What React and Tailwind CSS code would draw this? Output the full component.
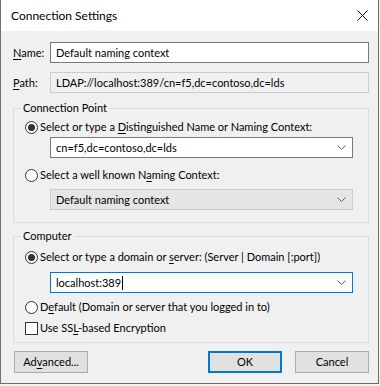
import React from "react";

function U({ children }) {
  return <span className="underline underline-offset-[2px] decoration-1">{children}</span>;
}

function Radio({ checked }) {
  return (
    <span className="w-[13px] h-[13px] rounded-full border border-[#333] bg-white flex items-center justify-center shrink-0">
      {checked && <span className="w-[7px] h-[7px] rounded-full bg-[#333]" />}
    </span>
  );
}

function Chevron() {
  return (
    <svg width="9" height="5" viewBox="0 0 9 5" className="shrink-0">
      <path d="M0.5 0.5 L4.5 4.5 L8.5 0.5" fill="none" stroke="#606060" strokeWidth="1" />
    </svg>
  );
}

function Legend({ children }) {
  return (
    <span className="absolute -top-[9px] left-[7px] px-[2px] bg-[#f0f0f0] leading-[16px]">{children}</span>
  );
}

export default function App() {
  return (
    <div className="w-[380px] h-[386px] bg-[#f0f0f0] font-['Lato',sans-serif] text-[11px] text-black leading-[16px]">
      <div className="w-[379px] h-[384px] flex flex-col border-l border-r border-b border-[#6e6e6e] bg-[#f0f0f0]">
        {/* Title bar */}
        <div className="h-[31px] bg-white flex items-center justify-between pl-[10px] pr-[10px] shrink-0 text-[12px]">
          <span>Connection Settings</span>
          <svg width="11" height="11" viewBox="0 0 11 11">
            <path d="M0.5 0.5 L10.5 10.5 M10.5 0.5 L0.5 10.5" stroke="#111" strokeWidth="1" />
          </svg>
        </div>

        <div className="flex flex-col pl-[12px] pr-[9px]">
          {/* Name / Path */}
          <div className="flex items-center mt-[11px]">
            <span className="w-[37px]">
              <U>N</U>ame:
            </span>
            <div className="flex-1 h-[21px] border border-[#7a7a7a] bg-white flex items-center pl-[5px]">
              Default naming context
            </div>
          </div>
          <div className="flex items-center mt-[9px]">
            <span className="w-[37px]">
              <U>P</U>ath:
            </span>
            <div className="flex-1 h-[21px] border border-[#cccccc] bg-[#f0f0f0] flex items-center pl-[5px]">
              LDAP://localhost:389/cn=f5,dc=contoso,dc=lds
            </div>
          </div>

          {/* Connection Point */}
          <div className="relative mt-[15px] border border-[#dcdcdc] pt-[10px] pb-[12px] pl-[11px] pr-[15px]">
            <Legend>Connection Point</Legend>
            <div className="flex items-center gap-[2px] h-[16px] whitespace-nowrap">
              <Radio checked />
              <span>
                Select or type a <U>D</U>istinguished Name or Naming Context:
              </span>
            </div>
            <div className="ml-[25px] mt-[2px] h-[21px] border border-[#7a7a7a] bg-white flex items-center justify-between pl-[5px] pr-[6px]">
              <span>cn=f5,dc=contoso,dc=lds</span>
              <Chevron />
            </div>
            <div className="flex items-center gap-[2px] h-[16px] mt-[9px] whitespace-nowrap">
              <Radio />
              <span>
                Select a well known N<U>a</U>ming Context:
              </span>
            </div>
            <div className="ml-[25px] mt-[6px] h-[21px] border border-[#cccccc] bg-[#e5e5e5] flex items-center justify-between pl-[5px] pr-[6px]">
              <span>Default naming context</span>
              <Chevron />
            </div>
          </div>

          {/* Computer */}
          <div className="relative mt-[13px] border border-[#dcdcdc] pt-[12px] pb-[6px] pl-[11px] pr-[15px]">
            <Legend>Computer</Legend>
            <div className="flex items-center gap-[2px] h-[16px] whitespace-nowrap">
              <Radio checked />
              <span>
                Select or type a domain or <U>s</U>erver: (Server | Domain [:port])
              </span>
            </div>
            <div className="ml-[25px] mt-[7px] h-[21px] border border-[#0078d7] bg-white flex items-center justify-between pl-[5px] pr-[6px]">
              <span className="flex items-center">
                localhost:389
                <span className="w-[1px] h-[14px] bg-black ml-[1px]" />
              </span>
              <Chevron />
            </div>
            <div className="flex items-center gap-[2px] h-[16px] mt-[6px] whitespace-nowrap">
              <Radio />
              <span>
                D<U>e</U>fault (Domain or server that you logged in to)
              </span>
            </div>
            <div className="flex items-center gap-[2px] h-[16px] mt-[5px] whitespace-nowrap">
              <span className="w-[13px] h-[13px] border border-[#333] bg-white shrink-0" />
              <span>
                Use SS<U>L</U>-based Encryption
              </span>
            </div>
          </div>

          {/* Buttons */}
          <div className="flex items-center mt-[8px] pl-[1px]">
            <div className="w-[74px] h-[22px] border border-[#adadad] bg-[#e1e1e1] flex items-center justify-center">
              Ad<U>v</U>anced...
            </div>
            <div className="flex-1" />
            <div className="w-[74px] h-[22px] border-2 border-[#0078d7] bg-[#e1e1e1] flex items-center justify-center">
              OK
            </div>
            <div className="w-[74px] h-[22px] ml-[13px] border border-[#adadad] bg-[#e1e1e1] flex items-center justify-center">
              Cancel
            </div>
          </div>
        </div>
      </div>
    </div>
  );
}
